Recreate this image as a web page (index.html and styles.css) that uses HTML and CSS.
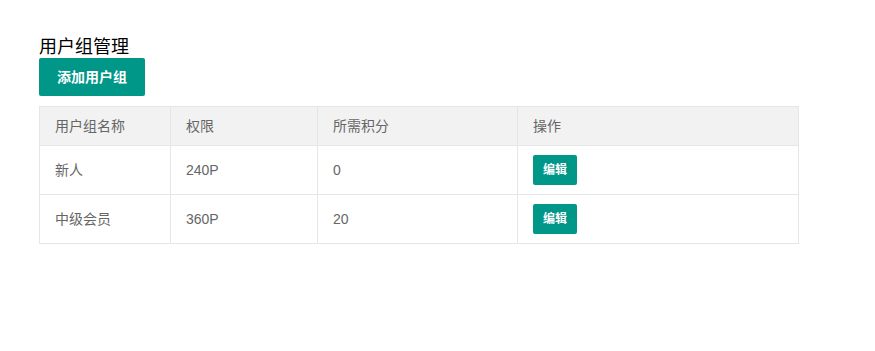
FILE: index.html
```html
<!DOCTYPE html>
<html lang="zh-CN">
<head>
<meta charset="UTF-8">
<meta name="viewport" content="width=device-width,initial-scale=1.0">
<title>用户组管理</title>
<link rel="stylesheet" href="styles.css">
</head>
<body>

<main class="container">
  <h2 class="title">用户组管理</h2>
  <button class="btn">添加用户组</button>

  <table class="group-table">
    <colgroup>
      <col class="col-name">
      <col class="col-perm">
      <col class="col-score">
      <col>
    </colgroup>
    <thead>
      <tr><th>用户组名称</th><th>权限</th><th>所需积分</th><th>操作</th></tr>
    </thead>
    <tbody>
      <tr><td>新人</td><td>240P</td><td>0</td><td><button class="btn btn-sm">编辑</button></td></tr>
      <tr><td>中级会员</td><td>360P</td><td>20</td><td><button class="btn btn-sm">编辑</button></td></tr>
    </tbody>
  </table>
</main>

</body>
</html>
```

FILE: styles.css
```css
:root{
  --green  : #009688;
  --border : #e6e6e6;
  --head   : #f2f2f2;
  --text   : #666;
}
*{box-sizing:border-box;}
html,body{margin:0;background:#fff;font-family:"Liberation Sans","Noto Sans CJK SC",sans-serif;}

.container{padding:36px 39px 0;width:799px;}

.title{margin:0;font-size:18px;line-height:22px;font-weight:400;color:#000;}

.btn{
  display:inline-block;height:38px;line-height:38px;padding:0 18px;
  background:var(--green);color:#fff;border:none;border-radius:2px;
  font-size:14px;font-weight:700;font-family:inherit;cursor:pointer;
}
.btn-sm{height:30px;line-height:30px;padding:0 10px;font-size:12px;vertical-align:top;}

.group-table{
  width:760px;margin:10px 0;border-collapse:collapse;table-layout:fixed;
  border:1px solid var(--border);
}
.col-name{width:131px;}
.col-perm{width:147px;}
.col-score{width:200px;}
.group-table th,.group-table td{
  padding:9px 15px;line-height:20px;font-size:14px;color:var(--text);
  text-align:left;font-weight:400;border:1px solid var(--border);
}
.group-table th{background:var(--head);}
.group-table td{height:48px;}
```
